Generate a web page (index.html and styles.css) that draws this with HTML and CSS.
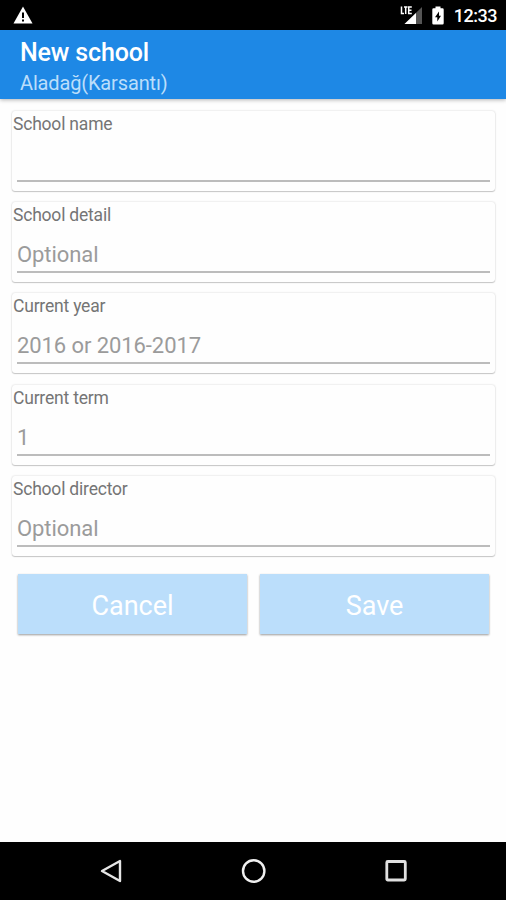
FILE: index.html
```html
<!DOCTYPE html>
<html lang="en">
<head>
  <meta charset="UTF-8">
  <title>New school</title>
  <link rel="stylesheet" href="styles.css">
</head>
<body>
  <div class="status-bar">
    <svg class="warning-icon" width="20" height="18" viewBox="0 0 20 18">
      <path d="M10 0.5L19.5 17.5H0.5Z" fill="#fff"/>
      <path d="M10 6.5V12M10 13.5V15.6" stroke="#000" stroke-width="2"/>
    </svg>
    <div class="status-right">
      <svg class="signal-icon" width="23" height="20" viewBox="0 0 23 20">
        <path d="M22 2V19H4.500Z" fill="#555"/>
        <path d="M16 7.900V19H4.500Z" fill="#fff"/>
        <path d="M1.500 1.500V8.500H4M4 2H7.500M5.700 2V9M11.800 2H8.700V8.500H11.800M8.700 5.200H11.500" fill="none" stroke="#fff" stroke-width="1.500"/>
      </svg>
      <svg class="battery-icon" width="12" height="19" viewBox="0 0 12 19">
        <path d="M3.500 0.500H8.500V2.300H10.500Q11.700 2.300 11.700 3.500V17.300Q11.700 18.500 10.500 18.500H1.500Q0.300 18.500 0.300 17.300V3.500Q0.300 2.300 1.500 2.300H3.500Z" fill="#fff"/>
        <path d="M7 5.500L3 11.300H5.300V15.500L9 9.700H7Z" fill="#000"/>
      </svg>
      <span class="clock">12:33</span>
    </div>
  </div>

  <div class="toolbar">
    <div class="title">New school</div>
    <div class="subtitle">Aladağ(Karsantı)</div>
  </div>

  <form class="school-form">
    <div class="card">
      <label for="name">School name</label>
      <input type="text" id="name">
    </div>
    <div class="card">
      <label for="detail">School detail</label>
      <input type="text" id="detail" placeholder="Optional">
    </div>
    <div class="card">
      <label for="year">Current year</label>
      <input type="text" id="year" placeholder="2016 or 2016-2017">
    </div>
    <div class="card">
      <label for="term">Current term</label>
      <input type="text" id="term" placeholder="1">
    </div>
    <div class="card">
      <label for="director">School director</label>
      <input type="text" id="director" placeholder="Optional">
    </div>

    <div class="button-container">
      <button type="button" class="btn">Cancel</button>
      <button type="button" class="btn">Save</button>
    </div>
  </form>

  <div class="nav-bar">
    <svg width="24" height="26" viewBox="0 0 24 26">
      <path d="M21 3V23L3 13Z" fill="none" stroke="#e6e6e6" stroke-width="2.400" stroke-linejoin="round"/>
    </svg>
    <svg width="26" height="26" viewBox="0 0 26 26">
      <circle cx="12.700" cy="13" r="10.700" fill="none" stroke="#f0f0f0" stroke-width="2.400"/>
    </svg>
    <svg width="24" height="26" viewBox="0 0 24 26">
      <rect x="2.800" y="3.500" width="18.500" height="18.500" rx="1" fill="none" stroke="#e0e0e0" stroke-width="2.800"/>
    </svg>
  </div>
</body>
</html>
```

FILE: styles.css
```css
* {
  box-sizing: border-box;
}

body {
  margin: 0;
  height: 900px;
  display: flex;
  flex-direction: column;
  background-color: #fefefe;
  font-family: Roboto, sans-serif;
  overflow: hidden;
}

.status-bar {
  height: 30px;
  flex: none;
  display: flex;
  align-items: center;
  justify-content: space-between;
  padding: 0 9px 0 13px;
  background-color: #000;
}

.status-right {
  display: flex;
  align-items: center;
}

.signal-icon {
  margin-right: 9px;
}

.battery-icon {
  margin-right: 10px;
}

.clock {
  color: #fff;
  font-size: 18px;
  font-weight: 500;
  letter-spacing: -0.5px;
  line-height: 30px;
  padding-top: 2px;
}

.toolbar {
  height: 69px;
  flex: none;
  padding: 8px 20px 0;
  background-color: #1e88e5;
  box-shadow: 0 1px 4px rgba(0, 0, 0, 0.3);
}

.title {
  color: #fff;
  font-size: 25px;
  font-weight: 500;
  letter-spacing: -0.15px;
  line-height: 30px;
}

.subtitle {
  color: #bbdefb;
  font-size: 20px;
  letter-spacing: -0.15px;
  line-height: 30px;
}

.school-form {
  flex: 1;
  display: flex;
  flex-direction: column;
  gap: 11.4px;
  padding: 11.5px 11px 0 12px;
}

.card {
  height: 80px;
  display: flex;
  flex-direction: column;
  padding: 2px 5px 9px 1px;
  border-radius: 3px;
  background-color: #fefefe;
  box-shadow: 0 0 2px rgba(0, 0, 0, 0.2), 0 1px 1px rgba(0, 0, 0, 0.18);
}

.card label {
  color: #757575;
  font-size: 17.5px;
  letter-spacing: -0.2px;
  line-height: 22px;
}

.card input {
  flex: 1;
  min-height: 0;
  margin: 0 0 0 4px;
  padding: 12px 0 0;
  border: none;
  border-bottom: 2px solid #bcbcbc;
  background: none;
  font-family: inherit;
  font-size: 22px;
  letter-spacing: -0.08px;
  outline: none;
}

.card input::placeholder {
  color: #9b9b9b;
  opacity: 1;
}

.button-container {
  display: flex;
  gap: 13px;
  padding: 7px 6px 0;
}

.btn {
  flex: 1;
  height: 60px;
  padding: 4px 0 0;
  border: none;
  background-color: #bbdefb;
  box-shadow: 0 1px 2px rgba(0, 0, 0, 0.4);
  color: #fff;
  font-family: inherit;
  font-size: 27px;
}

.nav-bar {
  height: 58px;
  flex: none;
  display: flex;
  align-items: center;
  justify-content: space-between;
  padding: 0 98px 0 99px;
  background-color: #000;
}
```
